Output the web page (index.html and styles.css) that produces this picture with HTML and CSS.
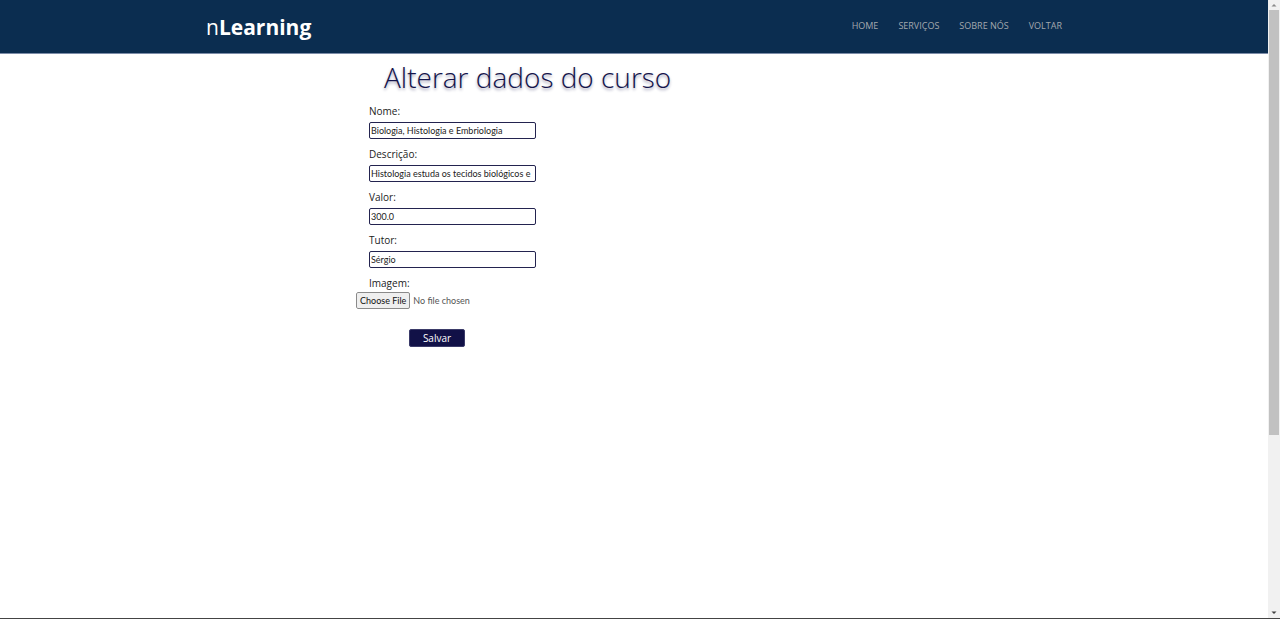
FILE: index.html
```html
<!DOCTYPE html>
<html lang="pt-BR">
<head>
<meta charset="utf-8">
<title>nLearning</title>
<link rel="stylesheet" href="styles.css">
</head>
<body>
<div class="page">
  <header class="header">
    <div class="container">
      <a class="logo" href="#">n<strong>Learning</strong></a>
      <nav class="nav">
        <a href="#">HOME</a>
        <a href="#">SERVIÇOS</a>
        <a href="#">SOBRE NÓS</a>
        <a href="#">VOLTAR</a>
      </nav>
    </div>
  </header>
  <main class="main">
    <h1 class="title">Alterar dados do curso</h1>
    <form class="form">
      <div class="field"><label for="nome">Nome:</label><input id="nome" type="text" value="Biologia, Histologia e Embriologia"></div>
      <div class="field"><label for="descricao">Descrição:</label><input id="descricao" type="text" value="Histologia estuda os tecidos biológicos e"></div>
      <div class="field"><label for="valor">Valor:</label><input id="valor" type="text" value="300.0"></div>
      <div class="field"><label for="tutor">Tutor:</label><input id="tutor" type="text" value="Sérgio"></div>
      <div class="field"><label for="imagem">Imagem:</label><input class="file" id="imagem" type="file"></div>
      <button class="save" type="button">Salvar</button>
    </form>
  </main>
</div>
<div class="scrollbar" aria-hidden="true">
  <svg class="arrow" viewBox="0 0 12 10"><path d="M3.5 6.5 6 4l2.500 2.500z" fill="#8a8a8a"/></svg>
  <div class="track"><div class="thumb"></div></div>
  <svg class="arrow" viewBox="0 0 12 10"><path d="M3.500 3.500h5L6 6z" fill="#404040"/></svg>
</div>
</body>
</html>
```
FILE: styles.css
```css
* { box-sizing: border-box; }

body {
  display: flex;
  min-height: 100vh;
  margin: 0;
  border-bottom: 1px solid #444;
  background: #fff;
  color: #222;
  font-family: "Open Sans", "Noto Sans", sans-serif;
}

.page { flex: 1; min-width: 0; }

.header {
  background: #0b2d50;
  border-bottom: 1px solid #7c8ca8;
}

.container {
  display: flex;
  align-items: center;
  justify-content: space-between;
  max-width: 856px;
  height: 53px;
  margin: 0 auto;
}

.logo {
  color: #fff;
  font-size: 21px;
  font-weight: 400;
  line-height: 32px;
  text-decoration: none;
}

.logo strong { font-weight: 700; }

.nav { display: flex; gap: 20px; }

.nav a {
  color: #a3a8ae;
  font-size: 9px;
  line-height: 16px;
  padding-bottom: 2px;
  text-decoration: none;
}

.main {
  max-width: 530px;
  margin: 0 auto;
}

.title {
  margin: 3px 0 8px 15px;
  color: #14144b;
  font-size: 28px;
  font-weight: 300;
  line-height: 40px;
  text-shadow: 0 2px 3px rgba(20, 20, 75, 0.4);
}

.form { width: 167px; }

.field {
  display: flex;
  flex-direction: column;
  gap: 5px;
  margin-bottom: 9px;
}

.field label {
  font-size: 10px;
  line-height: 12px;
}

.field input {
  width: 100%;
  height: 17px;
  padding: 0 1px;
  border: 1px solid #23234f;
  border-radius: 2px;
  background: #fff;
  color: #222;
  font-family: Lato, "Open Sans", sans-serif;
  font-size: 9px;
}

.field .file {
  align-self: flex-start;
  margin-left: -13px;
  margin-top: -2px;
  padding: 0;
  border: 0;
  color: #555;
  line-height: 17px;
}

.file::file-selector-button {
  height: 17px;
  margin: 0 3px 0 0;
  padding: 0 3px;
  border: 1px solid #8a8a8a;
  border-radius: 2px;
  background: #efefef;
  color: #111;
  font-family: inherit;
  font-size: 9px;
}

.save {
  display: block;
  width: 56px;
  height: 18px;
  margin: 20px 0 0 40px;
  padding: 0;
  border: 1px solid #3b3b69;
  border-radius: 2px;
  background: #111147;
  color: #fff;
  font-family: inherit;
  font-size: 10px;
  line-height: 16px;
}

.scrollbar {
  display: flex;
  flex-direction: column;
  width: 12px;
  background: #f1f1f1;
}

.arrow { width: 12px; height: 10px; }

.track { flex: 1; padding: 0 1px; }

.thumb { height: 71%; background: #c1c1c1; }
```
